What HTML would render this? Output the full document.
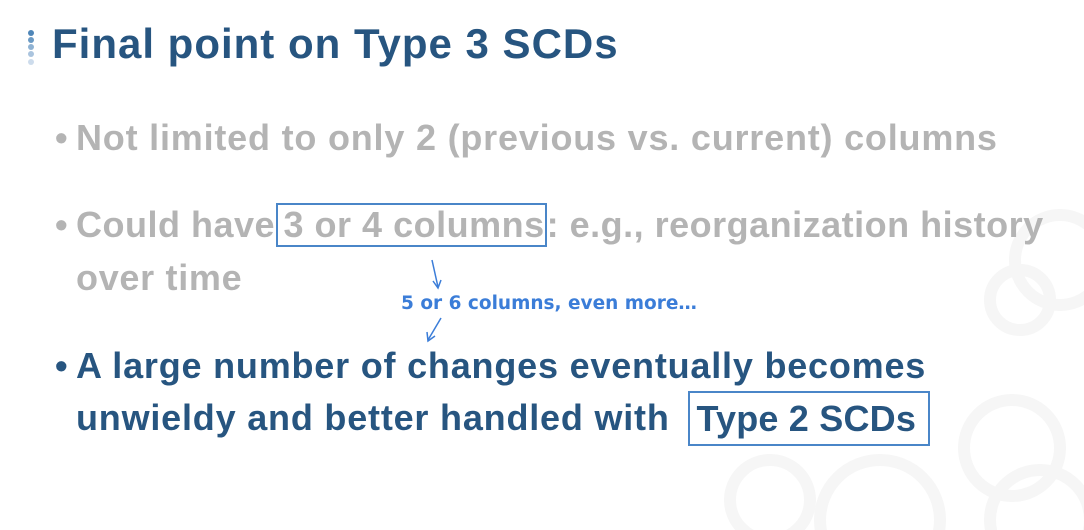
<!DOCTYPE html>
<html><head><style>
body{margin:0;width:1084px;height:530px;overflow:hidden;background:#fff;font-family:"Liberation Sans",sans-serif;position:relative}
.t{position:absolute;white-space:nowrap;font-weight:bold}
.g{color:#b4b4b4;font-size:36px;letter-spacing:0.5px}
.b{color:#275580;font-size:36px;letter-spacing:0.8px}
.bx{display:inline-block;border:2px solid #4a86c8;line-height:40px;height:40px;vertical-align:top;margin-top:-1px}
</style></head><body>
<svg width="1084" height="530" style="position:absolute;left:0;top:0">
<g fill="none" stroke="#f6f6f6" stroke-width="12">
<circle cx="1020" cy="300" r="30"/><circle cx="1060" cy="260" r="45"/>
<circle cx="1012" cy="448" r="48"/><circle cx="880" cy="520" r="60"/>
<circle cx="1040" cy="520" r="50"/><circle cx="770" cy="500" r="40"/>
</g>
<g fill="#4f86b8"><circle cx="31" cy="33" r="3"/></g>
<g fill="#6b9ac4"><circle cx="31" cy="40" r="3"/></g>
<g fill="#8fb2d3"><circle cx="31" cy="47" r="3"/></g>
<g fill="#aac4de"><circle cx="31" cy="54" r="3"/></g>
<g fill="#cddcec"><circle cx="31" cy="62" r="3"/></g>
<g stroke="#3b7dd8" stroke-width="1.5" fill="none">
<line x1="432" y1="260" x2="438" y2="287"/><path d="M433 281 L438 288 L441 280"/>
<line x1="441" y1="318" x2="428" y2="340"/><path d="M427 332 L428 341 L435 336"/>
</g>
</svg>
<div class="t" style="left:52px;top:20px;font-size:42px;letter-spacing:1px;color:#275580">Final point on Type 3 SCDs</div>
<div class="t g" style="left:55px;top:117px">•</div>
<div class="t g" style="left:76px;top:117px;letter-spacing:0.8px">Not limited to only 2 (previous vs. current) columns</div>
<div class="t g" style="left:55px;top:204px">•</div>
<div class="t g" style="left:76px;top:204px;line-height:42px">Could have <span class="bx" style="padding:0 0 0 6px;margin-left:-10px">3 or 4 columns</span>: e.g., reorganization history</div>
<div class="t g" style="left:76px;top:257px;letter-spacing:0.7px">over time</div>
<div class="t" style="left:401px;top:293px;font-size:18.5px;font-family:'DejaVu Sans',sans-serif;color:#3b7dd8">5 or 6 columns, even more…</div>
<div class="t b" style="left:55px;top:345px">•</div>
<div class="t b" style="left:76px;top:345px">A large number of changes eventually becomes</div>
<div class="t b" style="left:76px;top:397px;line-height:42px">unwieldy and better handled with <span class="bx" style="height:51px;line-height:51px;margin-top:-6px;padding:0 12px 0 6px;margin-left:8px;letter-spacing:0.2px">Type 2 SCDs</span></div>
</body></html>
